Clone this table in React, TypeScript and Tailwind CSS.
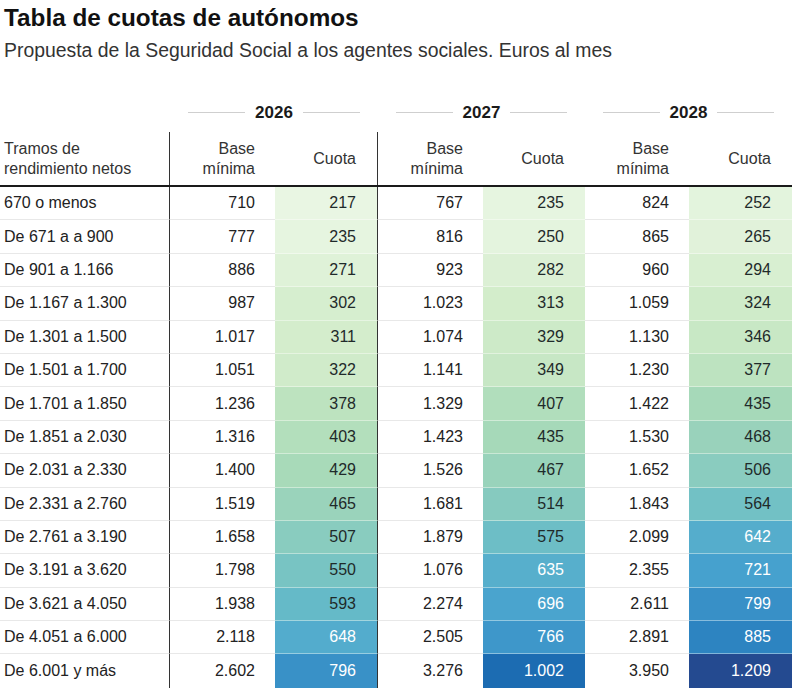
import React from 'react';

type Row = [string, string, string, string, string, string, string];

const rows: Row[] = [
  ['670 o menos', '710', '217', '767', '235', '824', '252'],
  ['De 671 a a 900', '777', '235', '816', '250', '865', '265'],
  ['De 901 a 1.166', '886', '271', '923', '282', '960', '294'],
  ['De 1.167 a 1.300', '987', '302', '1.023', '313', '1.059', '324'],
  ['De 1.301 a 1.500', '1.017', '311', '1.074', '329', '1.130', '346'],
  ['De 1.501 a 1.700', '1.051', '322', '1.141', '349', '1.230', '377'],
  ['De 1.701 a 1.850', '1.236', '378', '1.329', '407', '1.422', '435'],
  ['De 1.851 a 2.030', '1.316', '403', '1.423', '435', '1.530', '468'],
  ['De 2.031 a 2.330', '1.400', '429', '1.526', '467', '1.652', '506'],
  ['De 2.331 a 2.760', '1.519', '465', '1.681', '514', '1.843', '564'],
  ['De 2.761 a 3.190', '1.658', '507', '1.879', '575', '2.099', '642'],
  ['De 3.191 a 3.620', '1.798', '550', '1.076', '635', '2.355', '721'],
  ['De 3.621 a 4.050', '1.938', '593', '2.274', '696', '2.611', '799'],
  ['De 4.051 a 6.000', '2.118', '648', '2.505', '766', '2.891', '885'],
  ['De 6.001 y más', '2.602', '796', '3.276', '1.002', '3.950', '1.209'],
];

// value -> colour stops, roughly the GnBu ramp of the original chart
const stops: [number, string][] = [
  [200, '#ecf7e6'],
  [260, '#e2f3dc'],
  [310, '#d4edcc'],
  [380, '#bce3bf'],
  [430, '#a8dab9'],
  [470, '#98d2bb'],
  [510, '#88cbbf'],
  [560, '#74c2c4'],
  [600, '#62b8c9'],
  [650, '#52abcd'],
  [720, '#46a1ce'],
  [800, '#3890c7'],
  [890, '#2c83c1'],
  [1000, '#1c6cb2'],
  [1209, '#244a90'],
];

const hexToRgb = (h: string) => [1, 3, 5].map((i) => parseInt(h.slice(i, i + 2), 16));

const colorFor = (v: number) => {
  if (v <= stops[0][0]) return stops[0][1];
  for (let i = 1; i < stops.length; i++) {
    const [v1, c1] = stops[i];
    if (v <= v1) {
      const [v0, c0] = stops[i - 1];
      const t = (v - v0) / (v1 - v0);
      const a = hexToRgb(c0);
      const b = hexToRgb(c1);
      const m = a.map((x, k) => Math.round(x + (b[k] - x) * t));
      return `rgb(${m[0]}, ${m[1]}, ${m[2]})`;
    }
  }
  return stops[stops.length - 1][1];
};

const toNum = (s: string) => parseInt(s.replace('.', ''), 10);

const grid = 'grid grid-cols-[170px_105px_103px_105px_102px_104px_103px] w-[792px]';

const YearHead = ({ year }: { year: string }) => (
  <div className="col-span-2 flex items-center gap-[10px] px-[18px]">
    <div className="h-px flex-1 bg-[#cfcfcf]" />
    <span className="text-[17px] font-bold text-[#1a1a1a]">{year}</span>
    <div className="h-px flex-1 bg-[#cfcfcf]" />
  </div>
);

const BaseHead = () => (
  <div className="flex flex-col justify-center text-right pr-[20px] leading-[20px]">
    <span>Base</span>
    <span>mínima</span>
  </div>
);

const CuotaHead = ({ line }: { line?: boolean }) => (
  <div className={`flex items-center justify-end pr-[21px] ${line ? 'border-r border-[#333]' : ''}`}>
    Cuota
  </div>
);

export default function App() {
  return (
    <div className="w-[800px] h-[691px] bg-white overflow-hidden font-['Liberation_Sans',Arial,sans-serif] text-[#222]">
      <h1 className="pt-[4px] pl-[4px] text-[24.3px] leading-[28px] font-bold text-[#111]">
        Tabla de cuotas de autónomos
      </h1>
      <p className="mt-[7px] pl-[4px] text-[19.4px] leading-[22px] text-[#333]">
        Propuesta de la Seguridad Social a los agentes sociales. Euros al mes
      </p>

      <div className={`${grid} mt-[39px] h-[24px]`}>
        <div />
        <YearHead year="2026" />
        <YearHead year="2027" />
        <YearHead year="2028" />
      </div>

      <div className={`${grid} mt-[8px] h-[55px] border-b-2 border-[#1a1a1a] text-[16px] text-[#333]`}>
        <div className="flex flex-col justify-center pl-[4px] leading-[20px] border-r border-[#333]">
          <span>Tramos de</span>
          <span>rendimiento netos</span>
        </div>
        <BaseHead />
        <CuotaHead line />
        <BaseHead />
        <CuotaHead />
        <BaseHead />
        <CuotaHead />
      </div>

      {rows.map((r, i) => {
        const last = i === rows.length - 1;
        const sep = last ? '' : 'border-b';
        return (
          <div key={r[0]} className={`${grid} h-[33.4px] text-[16px]`}>
            <div className={`flex items-center pl-[4px] border-r border-[#333] ${sep} border-b-[#e8e8e8]`}>
              {r[0]}
            </div>
            {r.slice(1).map((cell, j) => {
              const isCuota = j % 2 === 1;
              if (!isCuota) {
                return (
                  <div
                    key={j}
                    className={`flex items-center justify-end pr-[20px] ${sep} border-[#e8e8e8]`}
                  >
                    {cell}
                  </div>
                );
              }
              const v = toNum(cell);
              return (
                <div
                  key={j}
                  className={`flex items-center justify-end pr-[21px] ${sep} border-b-white/40 ${
                    j === 1 ? 'border-r border-r-[#333]' : ''
                  } ${v >= 600 ? 'text-white' : 'text-[#1f2a2a]'}`}
                  style={{ backgroundColor: colorFor(v) }}
                >
                  {cell}
                </div>
              );
            })}
          </div>
        );
      })}
    </div>
  );
}
